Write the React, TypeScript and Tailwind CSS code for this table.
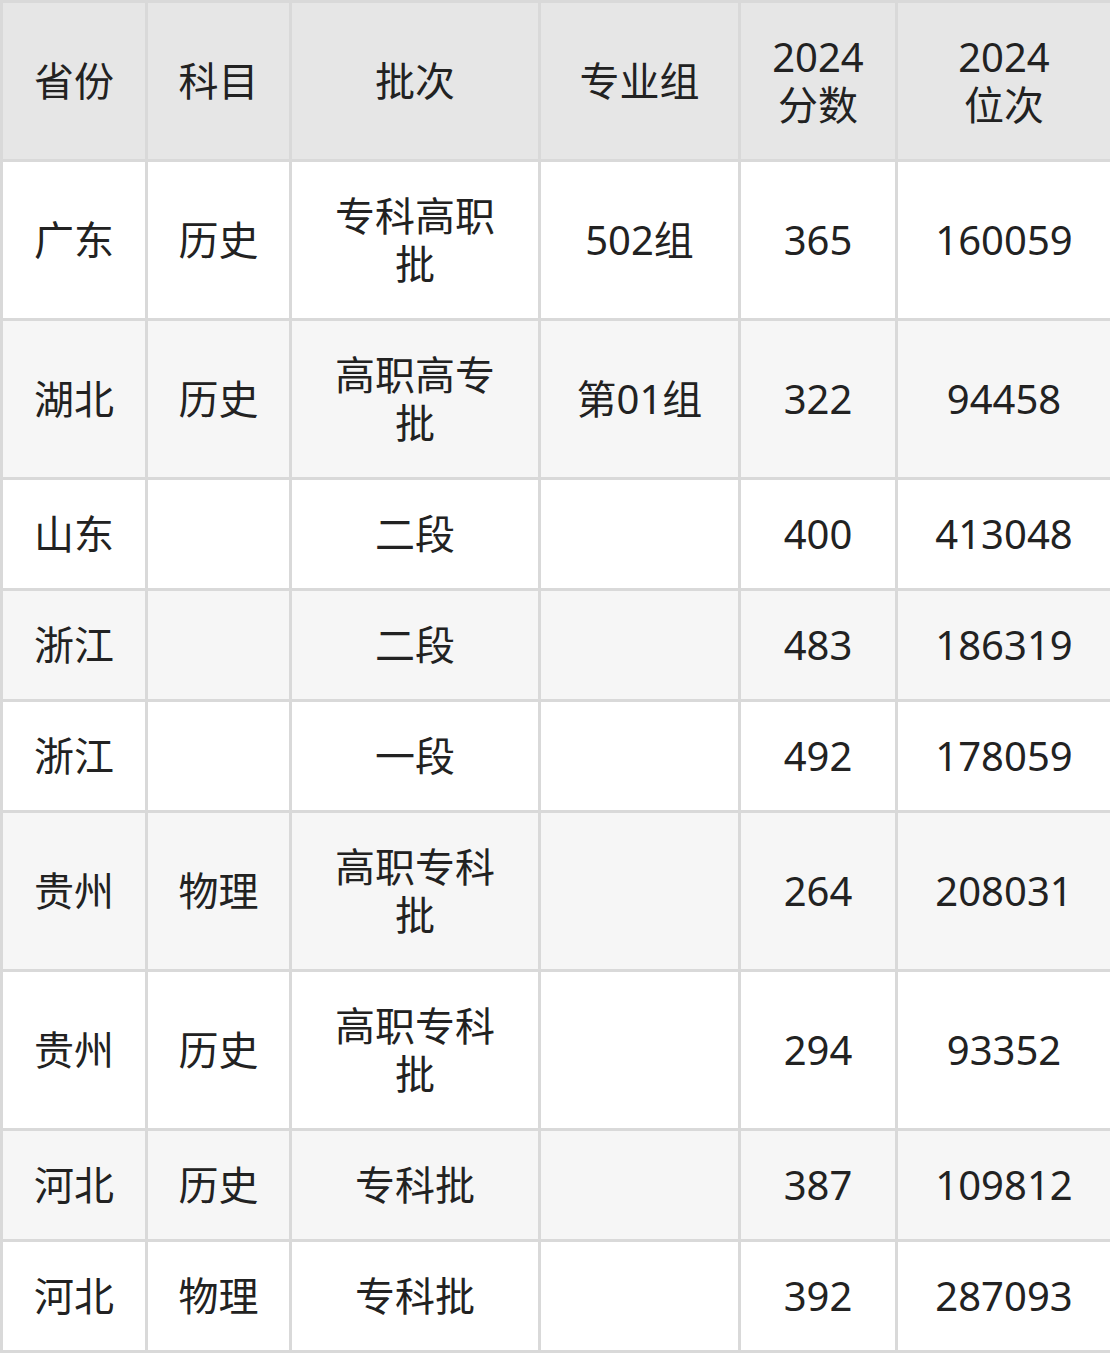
const HEAD = ["省份", "科目", "批次", "专业组", "2024\n分数", "2024\n位次"];

type Row = { cells: string[]; tall: boolean };

const ROWS: Row[] = [
  { cells: ["广东", "历史", "专科高职\n批", "502组", "365", "160059"], tall: true },
  { cells: ["湖北", "历史", "高职高专\n批", "第01组", "322", "94458"], tall: true },
  { cells: ["山东", "", "二段", "", "400", "413048"], tall: false },
  { cells: ["浙江", "", "二段", "", "483", "186319"], tall: false },
  { cells: ["浙江", "", "一段", "", "492", "178059"], tall: false },
  { cells: ["贵州", "物理", "高职专科\n批", "", "264", "208031"], tall: true },
  { cells: ["贵州", "历史", "高职专科\n批", "", "294", "93352"], tall: true },
  { cells: ["河北", "历史", "专科批", "", "387", "109812"], tall: false },
  { cells: ["河北", "物理", "专科批", "", "392", "287093"], tall: false },
];

const WIDTHS = ["w-[145px]", "w-[144px]", "w-[249px]", "w-[200px]", "w-[157px]", "w-[215px]"];

function Cell({ text }: { text: string }) {
  return (
    <>
      {text.split("\n").map((line, i) => (
        <div key={i}>{line}</div>
      ))}
    </>
  );
}

export default function App() {
  return (
    <div className="w-[1110px] h-[1353px] bg-white overflow-hidden">
      <table
        className="w-[1110px] table-fixed border-collapse border-[3px] border-[#d9d9d9] text-[40px] leading-[48px] text-[#222]"
        style={{ fontFamily: '"Noto Sans", "Noto Sans CJK SC", sans-serif' }}
      >
        <colgroup>
          {WIDTHS.map((w, i) => (
            <col key={i} className={w} />
          ))}
        </colgroup>
        <thead>
          <tr className="h-[159px] bg-[#e6e6e6]">
            {HEAD.map((h, i) => (
              <th key={i} className="border-[3px] border-[#d9d9d9] text-center align-middle font-normal">
                <Cell text={h} />
              </th>
            ))}
          </tr>
        </thead>
        <tbody>
          {ROWS.map((row, r) => (
            <tr
              key={r}
              className={`${row.tall ? "h-[159px]" : "h-[111px]"} ${r % 2 === 1 ? "bg-[#f6f6f6]" : "bg-white"}`}
            >
              {row.cells.map((c, i) => (
                <td key={i} className="border-[3px] border-[#d9d9d9] text-center align-middle">
                  <Cell text={c} />
                </td>
              ))}
            </tr>
          ))}
        </tbody>
      </table>
    </div>
  );
}
